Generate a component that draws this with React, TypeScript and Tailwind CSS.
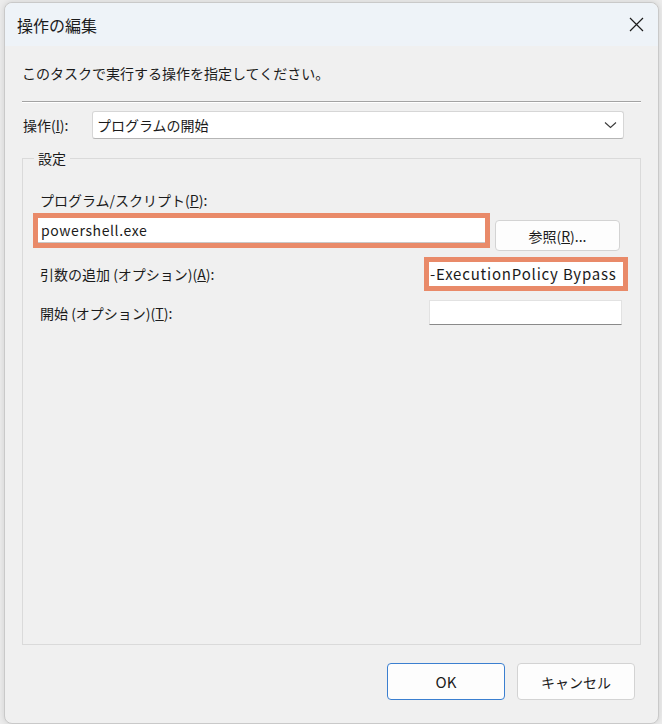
const font = "font-['Noto_Sans_CJK_JP','Noto_Sans',sans-serif]";

function Chevron() {
  return (
    <svg width="13" height="8" viewBox="0 0 13 8" fill="none">
      <polyline points="1,1.5 6.5,6.5 12,1.5" stroke="#3a3a3a" strokeWidth="1.1" />
    </svg>
  );
}

function CloseIcon() {
  return (
    <svg width="15" height="15" viewBox="0 0 15 15" fill="none">
      <path d="M1 1 L14 14 M14 1 L1 14" stroke="#1c1c1c" strokeWidth="1.2" />
    </svg>
  );
}

export default function App() {
  return (
    <div className={`h-[724px] w-[662px] overflow-hidden bg-[#ececec] pt-[2px] pl-[4px] ${font} text-[#1b1b1b]`}>
      <div className="flex h-[722px] w-[655px] flex-col rounded-t-[8px] rounded-b-[8px] border border-[#c9c9c9] bg-[#f0f0f0] shadow-[0_0_6px_rgba(0,0,0,0.12)]">
        {/* title bar */}
        <div className="flex h-[43px] items-center justify-between rounded-t-[8px] bg-[#eef3f8] pl-[12px] pr-[14px]">
          <span className="text-[16px] leading-[20px]">操作の編集</span>
          <CloseIcon />
        </div>

        <div className="flex flex-col pl-[17px] pr-[17px]">
          <p className="mt-[17px] text-[14px] leading-[20px]">このタスクで実行する操作を指定してください。</p>

          <div className="mt-[18px] h-[2px] border-t border-b border-t-[#a3a3a3] border-b-white" />

          <div className="mt-[8px] flex items-center pr-[17px]">
            <span className="ml-[1px] w-[69px] text-[14px] leading-[20px]">
              操作(<span className="underline">I</span>):
            </span>
            <div className="flex h-[28px] flex-1 items-center justify-between rounded-[3px] border border-[#d6d6d6] border-b-[#b5b5b5] bg-white pl-[4px] pr-[6px]">
              <span className="text-[14px] leading-[20px]">プログラムの開始</span>
              <Chevron />
            </div>
          </div>

          <fieldset className="mt-[9px] h-[497px] border border-[#dadada] pl-[17px] pr-[12px]">
            <legend className="ml-[-6px] px-[4px] text-[14px] leading-[20px]">設定</legend>

            <p className="mt-[22px] text-[14px] leading-[20px]">
              プログラム/スクリプト(<span className="underline">P</span>):
            </p>

            <div className="mt-[3px] ml-[-7px] flex items-start">
              <div className="h-[35px] w-[457px] border-[5px] border-[#e98a69] bg-white">
                <div className="flex h-full items-center border-b border-[#c8c8c8] pl-[3px] text-[14px] leading-[20px] tracking-[0.6px]">
                  powershell.exe
                </div>
              </div>
              <button className="mt-[7px] ml-[5px] h-[31px] w-[125px] rounded-[4px] border border-[#d3d3d3] bg-[#fdfdfd] text-[14px] leading-[20px]">
                参照(<span className="underline">R</span>)...
              </button>
            </div>

            <div className="mt-[6px] flex items-center justify-between">
              <span className="text-[14px] leading-[20px]">
                引数の追加 (オプション)(<span className="underline">A</span>):
              </span>
              <div className="h-[34px] w-[204px] border-[5px] border-[#e98a69] bg-white">
                <div className="flex h-full items-center overflow-hidden whitespace-nowrap pl-[1px] text-[15px] leading-[20px] tracking-[0.8px]">
                  -ExecutionPolicy Bypass
                </div>
              </div>
            </div>

            <div className="mt-[9px] flex items-center justify-between">
              <span className="text-[14px] leading-[20px]">
                開始 (オプション)(<span className="underline">T</span>):
              </span>
              <div className="mr-[6px] h-[25px] w-[193px] border border-[#e2e2e2] border-b-[#8a8a8a] bg-white" />
            </div>
          </fieldset>

          <div className="mt-[18px] flex justify-end gap-[12px] pr-[6px]">
            <button className="h-[37px] w-[118px] rounded-[4px] border border-[#3b7fd0] bg-[#fdfdfd] text-[15px] leading-[20px]">
              OK
            </button>
            <button className="h-[37px] w-[118px] rounded-[4px] border border-[#d3d3d3] bg-[#fdfdfd] text-[14px] leading-[20px]">
              キャンセル
            </button>
          </div>
        </div>
      </div>
    </div>
  );
}
